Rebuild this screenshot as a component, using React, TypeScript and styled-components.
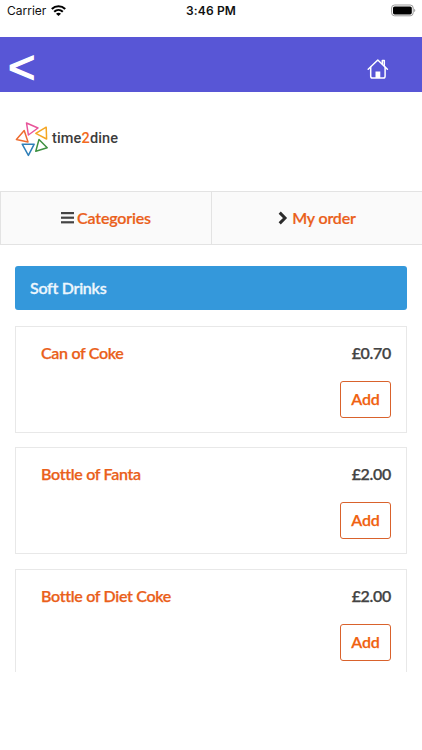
import React from "react";
import styled, { createGlobalStyle } from "styled-components";

const Global = createGlobalStyle`
  * { box-sizing: border-box; }
  body { margin: 0; background: #fff; }
`;

const Screen = styled.div`
  width: 422px;
  height: 750px;
  overflow: hidden;
  display: flex;
  flex-direction: column;
  background: #fff;
  font-family: Lato, sans-serif;
`;

const StatusBar = styled.div`
  height: 37px;
  flex: none;
  display: grid;
  grid-template-columns: 1fr auto 1fr;
  align-items: start;
  padding: 3px 6px 0 7px;
  font: 400 12px/16px Inter, sans-serif;
  color: #111;
`;

const Carrier = styled.div`
  display: flex;
  align-items: center;
  gap: 5px;

  svg { margin-top: -2px; }
`;

const Clock = styled.div`
  font-size: 12px;
  font-weight: 600;
  letter-spacing: 0.15px;
  margin-right: 1px;
`;

const BatteryBox = styled.div`
  display: flex;
  justify-content: flex-end;
  padding-top: 1px;
`;

const Header = styled.header`
  height: 55px;
  flex: none;
  display: flex;
  align-items: center;
  justify-content: space-between;
  padding: 4px 32px 0 8px;
  background: #5856d6;

  svg { margin-top: 5px; }
`;

const Back = styled.button`
  border: 0;
  padding: 0;
  background: none;
  color: #fff;
  font: 400 47px/50px "Liberation Sans", sans-serif;
  -webkit-text-stroke: 1.3px #fff;
`;

const Brand = styled.div`
  height: 99px;
  flex: none;
  display: flex;
  align-items: center;
  gap: 3px;
  padding: 0 0 6px 14px;
`;

const BrandName = styled.div`
  font: 500 14.5px/18px Roboto, sans-serif;
  letter-spacing: 0.15px;
  color: #3c3c3c;

  span { color: #f26a21; }
`;

const Tabs = styled.nav`
  height: 54px;
  flex: none;
  display: grid;
  grid-template-columns: 211px 1fr;
  border: 1px solid #e3e3e3;
  border-right: 0;
  background: #fafafa;
`;

const Tab = styled.a<{ $gap: number; $divided?: boolean }>`
  display: flex;
  align-items: center;
  justify-content: center;
  gap: ${(p) => p.$gap}px;
  padding-bottom: 1px;
  border-right: ${(p) => (p.$divided ? "1px solid #e3e3e3" : "0")};
  color: #ea601a;
  font-size: 16px;
  font-weight: 600;
  letter-spacing: -0.18px;
  -webkit-text-stroke: 0.2px #ea601a;
`;

const Menu = styled.main`
  height: 427px;
  flex: none;
  overflow: hidden;
  padding: 21px 15px 0;
`;

const SectionTitle = styled.h2`
  height: 44px;
  margin: 0 0 16px;
  padding: 0 15px;
  border-radius: 3px;
  background: #3498db;
  color: #ecf6fd;
  font-size: 16px;
  line-height: 43px;
  font-weight: 600;
  letter-spacing: -0.27px;
  -webkit-text-stroke: 0.3px #ecf6fd;
`;

const Card = styled.article`
  height: 107px;
  margin-bottom: 14.3px;
  padding: 14px 15px 0 25px;
  border: 1px solid #e8e8e8;
  display: flex;
  justify-content: space-between;
  font-size: 16px;
  line-height: 24px;
  font-weight: 600;
  letter-spacing: -0.31px;
`;

const Name = styled.div`
  color: #ea601a;
  -webkit-text-stroke: 0.25px #ea601a;
`;

const Side = styled.div`
  display: flex;
  flex-direction: column;
  align-items: flex-end;
  gap: 16px;
  color: #444;
  -webkit-text-stroke: 0.25px #444;
`;

const AddButton = styled.button`
  width: 51px;
  height: 37px;
  padding: 0 0 2px;
  border: 1px solid #d9622c;
  border-radius: 3px;
  background: #fff;
  color: #f0610f;
  font: 600 16px/33px Lato, sans-serif;
  letter-spacing: -0.15px;
  -webkit-text-stroke: 0.25px #f0610f;
`;

const items = [
  { name: "Can of Coke", price: "£0.70" },
  { name: "Bottle of Fanta", price: "£2.00" },
  { name: "Bottle of Diet Coke", price: "£2.00" },
];

const WifiIcon = () => (
  <svg width="15" height="11" viewBox="0 0 15 11" fill="none" stroke="#000" strokeWidth="2.1">
    <path d="M.8 4C4.6.4 10.4.4 14.2 4" />
    <path d="M3.2 6.7c2.5-2.3 6.1-2.3 8.6 0" />
    <path d="M5 8.7c1.5-1.3 3.5-1.3 5 0L7.5 11z" fill="#000" stroke="none" />
  </svg>
);

const BatteryIcon = () => (
  <svg width="25" height="13" viewBox="0 0 25 13">
    <rect x=".6" y="1" width="21.6" height="10.8" rx="3" fill="none" stroke="#999" />
    <rect x="2" y="2.4" width="18.8" height="8" rx="1.6" fill="#000" />
    <path d="M23.3 4.7v3.4c1.3-.6 1.3-2.8 0-3.4z" fill="#888" />
  </svg>
);

const HomeIcon = () => (
  <svg width="24" height="22" viewBox="0 0 24 22" fill="none" stroke="#fff" strokeWidth="1.5" strokeLinecap="round" strokeLinejoin="round">
    <path d="M2.2 11.2 11.8 2l9.6 9.2" />
    <path d="M4.7 9.2v9c0 1.2.6 1.8 1.8 1.8h10.8c1.2 0 1.8-.6 1.8-1.8v-9" />
    <path d="M16.3 5.8V2.4h2v5.3" />
    <path d="M9.5 20v-6.5h4.8V20z" fill="#fff" stroke="none" />
  </svg>
);

const LogoMark = () => (
  <svg width="35" height="36" viewBox="0 0 35 36" fill="none" strokeWidth="1.5" strokeLinejoin="round">
    <path d="M12.5 2 24 7 14.4 14z" stroke="#e8559a" />
    <path d="M32.2 6.2 32.6 18 21.8 12.4z" stroke="#f5a623" />
    <path d="M10.2 9.6 14 21 2.4 18.6z" stroke="#ee6c2f" />
    <path d="M25 18.4 33.2 26.8 21.8 30.2z" stroke="#3f9142" />
    <path d="M8.2 23.2H20.2L14.4 34.4z" stroke="#2f7fb8" />
  </svg>
);

const BarsIcon = () => (
  <svg width="13" height="12" viewBox="0 0 13 12" fill="#444">
    <rect y="0" width="13" height="2.2" />
    <rect y="4.6" width="13" height="2.2" />
    <rect y="9.2" width="13" height="2.2" />
  </svg>
);

const ChevronIcon = () => (
  <svg width="10" height="14" viewBox="0 0 10 14" fill="none" stroke="#2b2b2b" strokeWidth="3">
    <path d="M1.7 1.6 7 7l-5.3 5.4" />
  </svg>
);

export default function App() {
  return (
    <Screen>
      <Global />
      <StatusBar>
        <Carrier>
          Carrier
          <WifiIcon />
        </Carrier>
        <Clock>3:46 PM</Clock>
        <BatteryBox>
          <BatteryIcon />
        </BatteryBox>
      </StatusBar>
      <Header>
        <Back>&lt;</Back>
        <HomeIcon />
      </Header>
      <Brand>
        <LogoMark />
        <BrandName>
          time<span>2</span>dine
        </BrandName>
      </Brand>
      <Tabs>
        <Tab $gap={3} $divided>
          <BarsIcon />
          Categories
        </Tab>
        <Tab $gap={4}>
          <ChevronIcon />
          My order
        </Tab>
      </Tabs>
      <Menu>
        <SectionTitle>Soft Drinks</SectionTitle>
        {items.map((item) => (
          <Card key={item.name}>
            <Name>{item.name}</Name>
            <Side>
              {item.price}
              <AddButton>Add</AddButton>
            </Side>
          </Card>
        ))}
      </Menu>
    </Screen>
  );
}
